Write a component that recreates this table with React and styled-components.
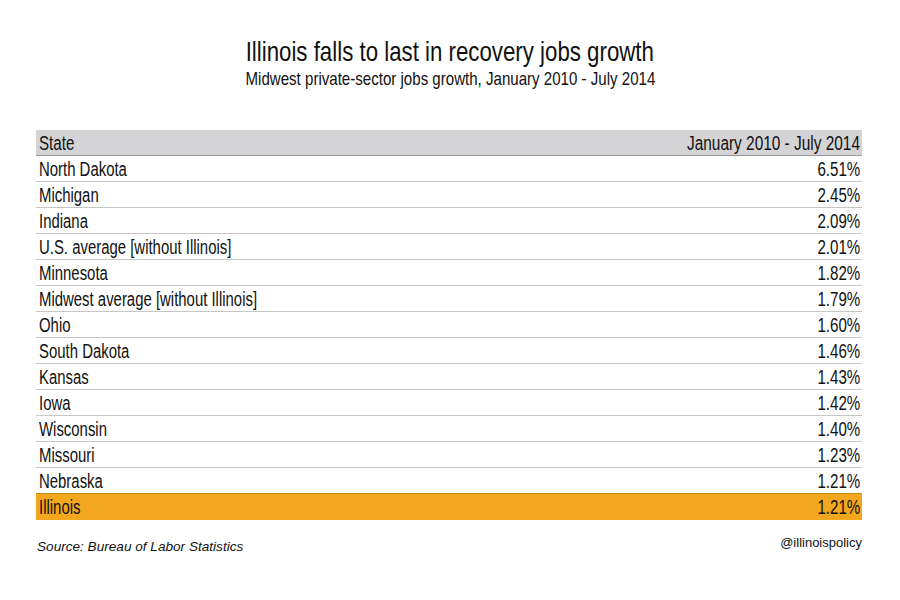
import React from 'react';
import styled, { createGlobalStyle } from 'styled-components';

const rows = [
    ['North Dakota', '6.51%'],
    ['Michigan', '2.45%'],
    ['Indiana', '2.09%'],
    ['U.S. average [without Illinois]', '2.01%'],
    ['Minnesota', '1.82%'],
    ['Midwest average [without Illinois]', '1.79%'],
    ['Ohio', '1.60%'],
    ['South Dakota', '1.46%'],
    ['Kansas', '1.43%'],
    ['Iowa', '1.42%'],
    ['Wisconsin', '1.40%'],
    ['Missouri', '1.23%'],
    ['Nebraska', '1.21%'],
    ['Illinois', '1.21%', true],
]

export default function App() {
    return(
        <Page>
            <GlobalStyle />
            <Title>
                <TopTitle><Narrow $scale={0.795} $origin="center">Illinois falls to last in recovery jobs growth</Narrow></TopTitle>
                <SubTitle><Narrow $scale={0.815} $origin="center">Midwest private-sector jobs growth, January 2010 - July 2014</Narrow></SubTitle>
            </Title>
            <Table>
                <HeadRow>
                    <Narrow>State</Narrow>
                    <Narrow $origin="right" $scale={0.79}>January 2010 - July 2014</Narrow>
                </HeadRow>
                {rows.map(([state, value, hl]) => {
                    return(
                        <Row key={state} $highlight={hl}>
                            <Narrow $scale={0.765}>{state}</Narrow>
                            <Narrow $origin="right">{value}</Narrow>
                        </Row>
                    )
                })}
            </Table>
            <Footer>
                <Source>Source: Bureau of Labor Statistics</Source>
                <Handle>@illinoispolicy</Handle>
            </Footer>
        </Page>
    )
}

const GlobalStyle = createGlobalStyle`
    body {
        margin: 0;
        background: #ffffff;
    }
`

const Page = styled.div`
    width: 900px;
    height: 600px;
    background: #ffffff;
    color: #111111;
    font-family: "Liberation Sans", Arial, sans-serif;
    padding-top: 37px;
    box-sizing: border-box;
`

/* no condensed face installed, so squeeze the sans horizontally */
const Narrow = styled.span`
    display: inline-block;
    white-space: nowrap;
    transform: scaleX(${p => p.$scale || 0.775});
    transform-origin: ${p => p.$origin || 'left'} center;
`

const Title = styled.div`
    text-align: center;
`

const TopTitle = styled.h1`
    font-size: 28px;
    font-weight: normal;
    margin: 0;
    line-height: 30px;
`

const SubTitle = styled.h2`
    font-size: 18.5px;
    font-weight: normal;
    margin: 0;
    line-height: 23px;
`

const Table = styled.div`
    margin: 40px 0 0 36px;
    width: 826px;
`

const Line = styled.div`
    display: flex;
    justify-content: space-between;
    align-items: flex-start;
    height: 25px;
    padding: 0 2px 0 3px;
    font-size: 19.5px;
    line-height: 26.5px;
`

const HeadRow = styled(Line)`
    background: #d4d4d6;
    border-bottom: 1px solid #9a9a9a;
    line-height: 26px;
`

const Row = styled(Line)`
    background: ${p => p.$highlight ? '#f2a71e' : '#ffffff'};
    border-bottom: 1px solid ${p => p.$highlight ? '#f2a71e' : '#c6c6c6'};
    margin-top: ${p => p.$highlight ? '-1px' : '0'};
    border-top: ${p => p.$highlight ? '1px solid #c98a14' : '0'};
`

const Footer = styled.div`
    display: flex;
    justify-content: space-between;
    align-items: flex-end;
    margin: 19px 0 0 37px;
    width: 825px;
    font-size: 13px;
`

const Source = styled.span`
    font-style: italic;
    font-size: 13.6px;
`

const Handle = styled.span`
    position: relative;
    top: -4px;
`
